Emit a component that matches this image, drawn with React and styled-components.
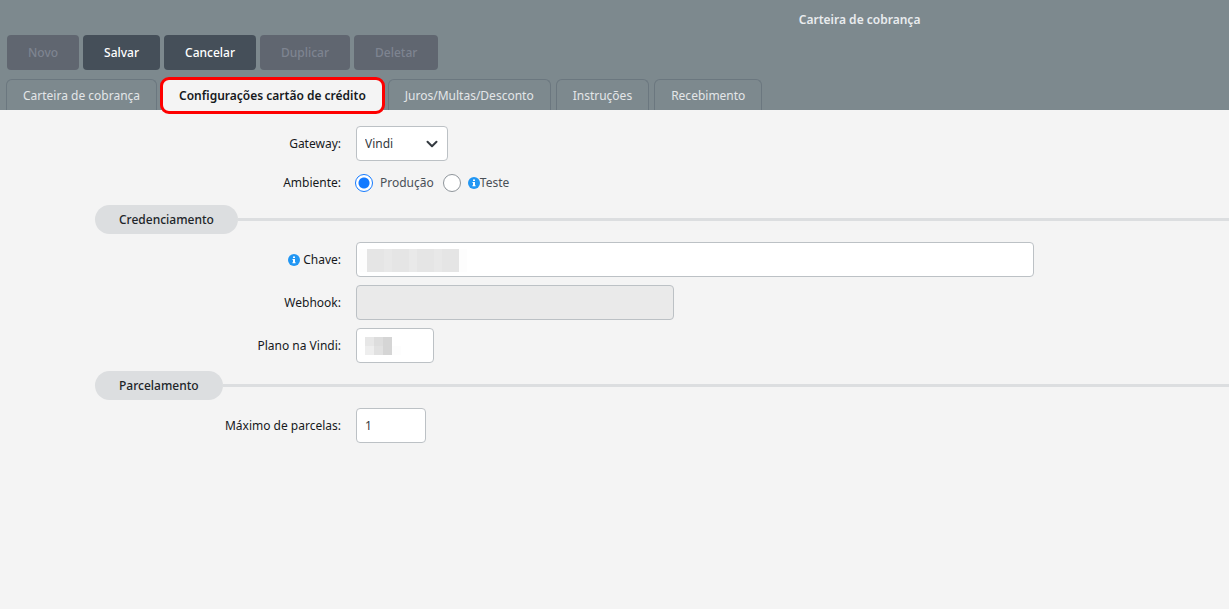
import React, { useState } from "react";
import styled, { createGlobalStyle, css } from "styled-components";

const GlobalStyle = createGlobalStyle`
  * {
    box-sizing: border-box;
  }

  body {
    margin: 0;
    background: #f4f4f4;
    color: #212529;
    font-family: "Noto Sans", sans-serif;
    font-size: 12px;
    line-height: 18px;
  }

  button,
  input,
  select {
    font: inherit;
  }
`;

const Header = styled.header`
  background: #7d898e;
`;

const Title = styled.h1`
  margin: 0;
  padding: 11px 0 6px 65%;
  color: #e9ecee;
  font-size: 12px;
  font-weight: 600;
  line-height: 18px;
  white-space: nowrap;
`;

const Toolbar = styled.div`
  display: flex;
  gap: 4px;
  padding: 0 7px;
`;

const ToolButton = styled.button`
  height: 35px;
  padding: 0 21px;
  border: 0;
  border-radius: 4px;
  background: #454f59;
  color: #fff;
  font-weight: 500;

  &:disabled {
    background: #606670;
    color: #7e8490;
  }
`;

const Tabs = styled.nav`
  display: flex;
  gap: 5px;
  padding: 9px 6px 0;
`;

const Tab = styled.button`
  position: relative;
  height: 31px;
  padding: 2px 16px 0;
  border: 1px solid #6b777f;
  border-bottom: 0;
  border-radius: 6px 6px 0 0;
  background: transparent;
  color: #e3e6e8;
  white-space: nowrap;

  ${({ $active }) =>
    $active &&
    css`
      border-color: #f4f4f4;
      background: #f4f4f4;
      color: #16191c;
      font-weight: 600;

      /* red frame around the current tab */
      &::after {
        content: "";
        position: absolute;
        inset: -3px -3px -4px;
        border: 3px solid #fe0000;
        border-radius: 9px;
      }
    `}
`;

const Form = styled.form`
  display: flex;
  flex-direction: column;
  gap: 8px;
  padding: 16px 0;
`;

const Row = styled.div`
  display: grid;
  grid-template-columns: 341px minmax(0, 1fr);
  column-gap: 15px;
  align-items: center;
  min-height: 28px;
`;

const Label = styled.label`
  display: flex;
  align-items: center;
  justify-content: flex-end;
  gap: 3px;
  color: #16191c;
`;

const Field = styled.div`
  position: relative;
  width: ${({ $width }) => $width}px;
  max-width: 100%;
`;

const control = css`
  display: block;
  width: 100%;
  height: 35px;
  padding: 0 8px;
  border: 1px solid #bcc1c5;
  border-radius: 4px;
  background: #fff;
  color: #343a40;
`;

const Input = styled.input`
  ${control}

  &:disabled {
    background: #eaeaea;
  }
`;

const Select = styled.select`
  ${control}
  appearance: none;
`;

const Chevron = styled.svg`
  position: absolute;
  top: 12px;
  right: 10px;
  pointer-events: none;
`;

const Mosaic = styled.svg`
  position: absolute;
  top: 0;
  left: 0;
  pointer-events: none;
`;

const RadioGroup = styled.div`
  display: flex;
  align-items: center;
  gap: 9px;
  margin-left: -1px;
`;

const RadioLabel = styled.label`
  display: flex;
  align-items: center;
  gap: 7px;
  color: #495057;
`;

const RadioText = styled.span`
  display: flex;
  align-items: center;
`;

const Radio = styled.input`
  appearance: none;
  width: 18px;
  height: 18px;
  margin: 0;
  border: 1px solid #8f959b;
  border-radius: 50%;
  background: #fff;

  &:checked {
    border-color: #147aff;
    background: radial-gradient(circle, #147aff 5px, #fff 6px);
  }
`;

const Section = styled.h2`
  display: flex;
  align-items: center;
  margin: 0 0 0 95px;
  font-size: 12px;
  font-weight: 500;

  &::after {
    content: "";
    flex: 1;
    height: 3px;
    background: #dcdee0;
  }
`;

const SectionName = styled.span`
  padding: 0 24px;
  border-radius: 15px;
  background: #dcdee0;
  line-height: 29px;
`;

const InfoIcon = () => (
  <svg width="12" height="12" viewBox="0 0 12 12" aria-hidden="true">
    <circle cx="6" cy="6" r="6" fill="#2196f3" />
    <path d="M5 2.6h2v1.5H5zM4.5 5H7v3.2h.6v1H4.4v-1H5V6h-.5z" fill="#fff" />
  </svg>
);

const tabs = [
  "Carteira de cobrança",
  "Configurações cartão de crédito",
  "Juros/Multas/Desconto",
  "Instruções",
  "Recebimento"
];

const App = () => {
  const [activeTab, setActiveTab] = useState(tabs[1]);
  const [ambiente, setAmbiente] = useState("producao");
  const [parcelas, setParcelas] = useState("1");

  return (
    <>
      <GlobalStyle />
      <Header>
        <Title>Carteira de cobrança</Title>
        <Toolbar>
          <ToolButton disabled>Novo</ToolButton>
          <ToolButton>Salvar</ToolButton>
          <ToolButton>Cancelar</ToolButton>
          <ToolButton disabled>Duplicar</ToolButton>
          <ToolButton disabled>Deletar</ToolButton>
        </Toolbar>
        <Tabs>
          {tabs.map((tab) => (
            <Tab
              key={tab}
              $active={tab === activeTab}
              onClick={() => setActiveTab(tab)}
            >
              {tab}
            </Tab>
          ))}
        </Tabs>
      </Header>

      <Form>
        <Row>
          <Label htmlFor="gateway">Gateway:</Label>
          <Field $width={92}>
            <Select id="gateway">
              <option>Vindi</option>
            </Select>
            <Chevron width="12" height="12" viewBox="0 0 12 12">
              <path
                d="M1.5 3.8 6 8.3l4.5-4.5"
                fill="none"
                stroke="#343a40"
                strokeWidth="2"
                strokeLinecap="round"
                strokeLinejoin="round"
              />
            </Chevron>
          </Field>
        </Row>
        <Row>
          <Label as="span">Ambiente:</Label>
          <RadioGroup role="radiogroup" aria-label="Ambiente">
            <RadioLabel>
              <Radio
                type="radio"
                name="ambiente"
                checked={ambiente === "producao"}
                onChange={() => setAmbiente("producao")}
              />
              Produção
            </RadioLabel>
            <RadioLabel>
              <Radio
                type="radio"
                name="ambiente"
                checked={ambiente === "teste"}
                onChange={() => setAmbiente("teste")}
              />
              <RadioText>
                <InfoIcon />
                Teste
              </RadioText>
            </RadioLabel>
          </RadioGroup>
        </Row>

        <Section>
          <SectionName>Credenciamento</SectionName>
        </Section>
        <Row>
          <Label htmlFor="chave">
            <InfoIcon />
            Chave:
          </Label>
          <Field $width={678}>
            <Input id="chave" />
            <Mosaic width="112" height="35" shapeRendering="crispEdges">
              <rect x="3" y="7" width="108" height="23" fill="#fdfdfd" />
              <rect x="11" y="7" width="92" height="23" fill="#e5e5e5" />
              <rect x="28" y="7" width="8" height="23" fill="#e8e8e8" />
              <rect x="53" y="7" width="8" height="23" fill="#e9e9e9" />
              <rect x="78" y="7" width="8" height="23" fill="#e8e8e8" />
            </Mosaic>
          </Field>
        </Row>
        <Row>
          <Label htmlFor="webhook">Webhook:</Label>
          <Field $width={318}>
            <Input id="webhook" disabled />
          </Field>
        </Row>
        <Row>
          <Label htmlFor="plano">Plano na Vindi:</Label>
          <Field $width={78}>
            <Input id="plano" />
            <Mosaic width="46" height="35" shapeRendering="crispEdges">
              <rect x="9" y="9" width="9" height="9" fill="#e7e7e7" />
              <rect x="18" y="9" width="9" height="9" fill="#dddddd" />
              <rect x="27" y="9" width="9" height="18" fill="#d5d5d5" />
              <rect x="9" y="18" width="9" height="9" fill="#eeeeee" />
              <rect x="18" y="18" width="9" height="9" fill="#e1e1e1" />
              <rect x="36" y="18" width="9" height="9" fill="#fdfdfd" />
            </Mosaic>
          </Field>
        </Row>

        <Section>
          <SectionName>Parcelamento</SectionName>
        </Section>
        <Row>
          <Label htmlFor="parcelas">Máximo de parcelas:</Label>
          <Field $width={70}>
            <Input
              id="parcelas"
              value={parcelas}
              onChange={(e) => setParcelas(e.target.value)}
            />
          </Field>
        </Row>
      </Form>
    </>
  );
};

export default App;
